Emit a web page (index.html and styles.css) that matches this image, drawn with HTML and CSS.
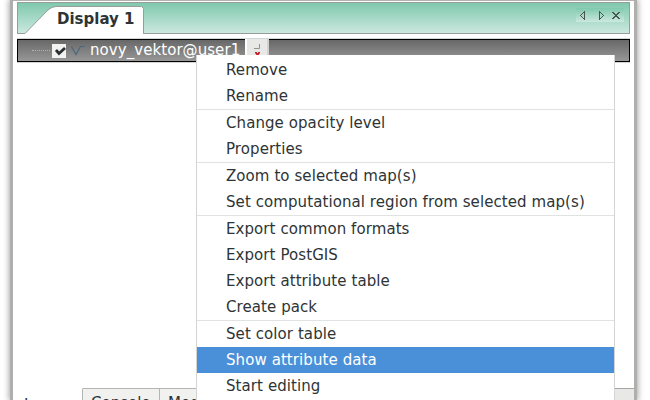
FILE: index.html
```
<!DOCTYPE html>
<html lang="en">
<head>
<meta charset="utf-8">
<title>Layer Manager</title>
<link rel="stylesheet" href="styles.css">
</head>
<body>
<div class="window">
  <header class="displays">
    <svg class="tab-shape" width="127" height="32" viewBox="0 0 127 32">
      <path d="M7 31.500 L30 8 Q34 4.500 38 4.500 H123.500 L125.500 6.500 V32 H7Z" fill="#fff"/>
      <path d="M0 31.500 H7 L30 8 Q34 4.500 38 4.500 H123.500 L125.500 6.500 V31.500 H127" fill="none" stroke="#979d9b"/>
    </svg>
    <span class="tab-title">Display 1</span>
    <div class="nav">
      <svg width="48" height="14" viewBox="0 0 48 14" fill="none" stroke="#4d5552" shape-rendering="crispEdges">
        <path d="M8.500 3.500v8L4.500 7.500zM23.500 3.500v8L27.500 7.500z"/>
        <path d="M36 4h2v1h1v1h2v-1h1v-1h2v1h-1v1h-1v1h-1v1h1v1h1v1h1v1h-2v-1h-1v-1h-2v1h-1v1h-2v-1h1v-1h1v-1h1v-1h-1v-1h-1v-1h-1z" fill="#4d5552" stroke="none"/>
      </svg>
    </div>
  </header>
  <div class="layer">
    <span class="dots"></span>
    <span class="check"><svg width="14" height="14" viewBox="0 0 14 14"><path d="M4 6l3 3.500L13 4" fill="none" stroke="#2b3032" stroke-width="2.800"/></svg></span>
    <svg class="vector" width="16" height="13" viewBox="0 0 16 13"><path d="M1.500 2.500L6 10.500L10.500 2.500H14.500" fill="none" stroke="#49677d" stroke-width="1.200"/></svg>
    <span class="name">novy_vektor@user1</span>
    <span class="options"><svg width="24" height="20" viewBox="0 0 24 20"><path d="M14.500 5v4.500H9" fill="none" stroke="#929292"/><path d="M10 13h2v1h1v-1h2v1l-2 3h-1l-2-3z" fill="#c5252f"/></svg></span>
  </div>
  <footer class="tabs">
    <span class="tab active">Layers</span>
    <span class="tab">Console</span>
    <span class="tab">Modules</span>
    <span class="rest"></span>
  </footer>
</div>
<ul class="menu">
  <li>Remove</li>
  <li>Rename</li>
  <li class="group">Change opacity level</li>
  <li>Properties</li>
  <li class="group">Zoom to selected map(s)</li>
  <li>Set computational region from selected map(s)</li>
  <li class="group">Export common formats</li>
  <li>Export PostGIS</li>
  <li>Export attribute table</li>
  <li>Create pack</li>
  <li class="group">Set color table</li>
  <li class="selected">Show attribute data</li>
  <li>Start editing</li>
</ul>
</body>
</html>
```
FILE: styles.css
```
* { box-sizing: border-box; }
body {
  margin: 0;
  height: 400px;
  overflow: hidden;
  background: #fff;
  color: #2e3436;
  font: 15px/26px "DejaVu Sans", sans-serif;
}
svg { display: block; }
.window {
  display: flex;
  flex-direction: column;
  width: 627px;
  height: 400px;
  margin-left: 10px;
  padding: 1px 4px 0;
  border: solid #b0afad;
  border-width: 0 3px;
  background: #fff;
  box-shadow: inset 0 1px #b4b2b0, 0 0 6px 1px rgba(0, 0, 0, .35);
}
.displays {
  display: flex;
  position: relative;
  flex: none;
  height: 32px;
  margin-top: 1px;
  border: 1px solid #969d9a;
  background: linear-gradient(#7fc8ae, #cce9df);
}
.tab-shape { flex: none; margin-top: -1px; }
.tab-title {
  position: absolute;
  left: 39px;
  top: 3px;
  font-weight: bold;
}
.nav {
  height: 14px;
  margin: 5px 5px 0 auto;
  background: linear-gradient(#7fc8ae, #cce9df);
}
.layer {
  display: flex;
  flex: none;
  align-items: center;
  height: 23px;
  margin-top: 5px;
  padding-left: 14px;
  border: 1px solid #000;
  background: linear-gradient(#686868, #979797);
  box-shadow: 0 -1px #d4d8d6, 0 1px #d4d4d4;
  color: #fff;
}
.dots {
  width: 18px;
  border-top: 1px dotted #b0b0b0;
}
.check {
  width: 14px;
  height: 14px;
  margin: 1px 0 0 2px;
  background: #f2f2f1;
}
.vector { margin-left: 4px; }
.name {
  width: 155px;
  margin: -2px 0 0 4px;
  letter-spacing: .06px;
}
.options {
  align-self: stretch;
  width: 24px;
  margin: -1px 0 0;
  background: #e8e8e6;
  border: solid #fff;
  border-width: 0 0 0 2px;
  box-shadow: inset -2px 0 #d2d2d2;
  overflow: hidden;
}
.options svg { margin-left: -2px; }
.tabs {
  display: flex;
  height: 12px;
  margin: auto -4px 0;
  overflow: hidden;
  line-height: 18px;
}
.tab {
  flex: none;
  width: 77px;
  height: 30px;
  padding: 5px 0 0 8px;
  border: solid #b4b4b3;
  border-width: 1px 1px 0 0;
  background: #f1f1f0;
}
.tab.active {
  width: 70px;
  padding: 7px 0 0 11px;
  border-top-color: #fff;
  background: #fff;
}
.rest {
  flex: 1;
  border-top: 1px solid #a5a5a3;
  background: #e8e8e6;
}
.menu {
  position: absolute;
  left: 196px;
  top: 55px;
  width: 419px;
  height: 345px;
  margin: 0;
  padding: 2px 0 0;
  overflow: hidden;
  list-style: none;
  background: #fff;
  border: solid #d2d5d4;
  border-width: 0 1px;
}
.menu li {
  height: 26px;
  padding-left: 29px;
  white-space: nowrap;
  letter-spacing: .08px;
}
.menu .group {
  height: 27px;
  border-top: 1px solid #e1e3e2;
}
.menu .selected { background: #4a90d9; color: #fff; }
```
